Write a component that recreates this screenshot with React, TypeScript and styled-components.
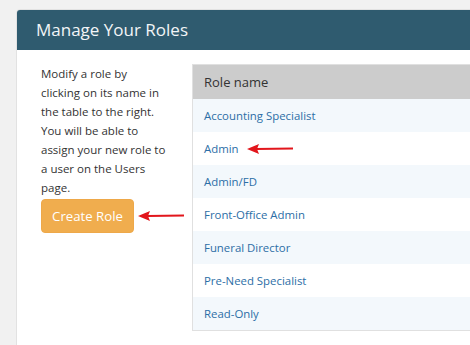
import React from "react";
import styled, { createGlobalStyle } from "styled-components";

const Global = createGlobalStyle`
  html, body { margin: 0; padding: 0; background: #f1f1f1; overflow: hidden; }
  body { font-family: "Open Sans", "Liberation Sans", sans-serif; color: #333; }
`;

const Page = styled.div`
  padding: 9px 0 0 16px;
  width: 600px;
`;

const Panel = styled.section`
  background: #fff;
  border: 1px solid #e2e2e2;
  border-radius: 4px 4px 0 0;
  overflow: hidden;
  height: 400px;
`;

const Header = styled.header`
  background: #2f5b6f;
  height: 41px;
  margin: -1px -1px 0 -1px;
  padding-left: 20px;
  display: flex;
  align-items: center;
  color: #f2f5f7;
  font-size: 17px;
`;

const Body = styled.div`
  display: flex;
  align-items: flex-start;
  padding: 14px 0 0 24px;
`;

const Side = styled.div`
  width: 126px;
  margin-right: 25px;
`;

const Intro = styled.p`
  margin: 0;
  font-size: 11.5px;
  line-height: 19px;
`;

const ButtonRow = styled.div`
  display: flex;
  align-items: center;
  margin-top: 2px;
  width: 200px;
`;

const Button = styled.button`
  width: 93px;
  height: 34px;
  background: #f0ad4e;
  border: 1px solid #eea849;
  border-radius: 4px;
  color: #fff;
  font-family: inherit;
  font-size: 13.2px;
  padding: 0;
`;

const Arrow = styled.svg<{ $gap: number }>`
  margin-left: ${(p) => p.$gap}px;
  flex: none;
`;

const Table = styled.div`
  flex: 1;
  border: 1px solid #e0e0e0;
`;

const HeadCell = styled.div`
  background: #cccccc;
  height: 34px;
  display: flex;
  align-items: center;
  padding-left: 11px;
  font-size: 13px;
  color: #333;
`;

const Row = styled.div<{ $striped: boolean }>`
  background: ${(p) => (p.$striped ? "#f3f8fc" : "#fff")};
  height: 33px;
  display: flex;
  align-items: center;
  padding-left: 11px;
  font-size: 11.4px;
`;

const Link = styled.a`
  color: #2c6ea6;
  text-decoration: none;
`;

const RedArrow = ({ gap }: { gap: number }) => (
  <Arrow $gap={gap} width="46" height="12" viewBox="0 0 46 12">
    <line x1="9" y1="6" x2="46" y2="5.5" stroke="#e2161c" strokeWidth="2.2" />
    <polygon points="0,6 12,1 10,6 12,11" fill="#e2161c" />
  </Arrow>
);

const roles = [
  "Accounting Specialist",
  "Admin",
  "Admin/FD",
  "Front-Office Admin",
  "Funeral Director",
  "Pre-Need Specialist",
  "Read-Only",
];

export default function App() {
  return (
    <>
      <Global />
      <Page>
        <Panel>
          <Header>Manage Your Roles</Header>
          <Body>
            <Side>
              <Intro>
                Modify a role by clicking on its name in the table to the right. You will be able to
                assign your new role to a user on the Users page.
              </Intro>
              <ButtonRow>
                <Button>Create Role</Button>
                <RedArrow gap={4} />
              </ButtonRow>
            </Side>
            <Table>
              <HeadCell>Role name</HeadCell>
              {roles.map((r, i) => (
                <Row key={r} $striped={i % 2 === 0}>
                  <Link href="#">{r}</Link>
                  {r === "Admin" && <RedArrow gap={8} />}
                </Row>
              ))}
            </Table>
          </Body>
        </Panel>
      </Page>
    </>
  );
}
